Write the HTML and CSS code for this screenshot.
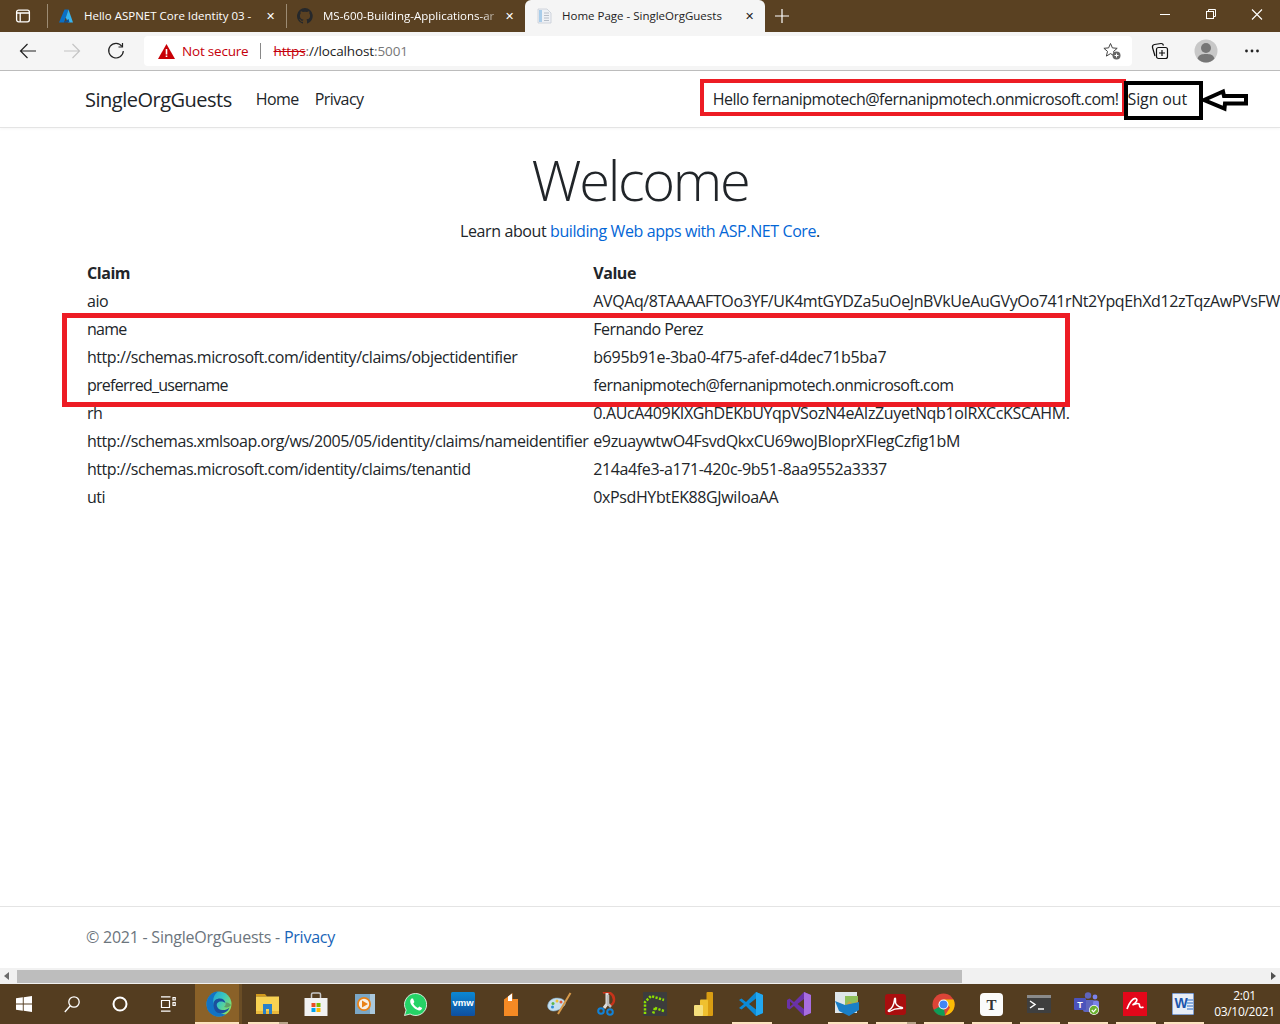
FILE: index.html
```html
<!DOCTYPE html>
<html lang="en">
<head>
<meta charset="utf-8">
<title>Home Page - SingleOrgGuests</title>
<link rel="stylesheet" href="styles.css">
</head>
<body>
<div class="window">
  <div class="tabstrip">
    <div class="tabstrip-btn">
      <svg width="16" height="16" viewBox="0 0 16 16" fill="none" stroke="#fff" stroke-width="1.3"><rect x="1.6" y="2.2" width="12.8" height="11.6" rx="2"/><path d="M1.6 5h12.8M5.2 5v8.8" /></svg>
    </div>
    <div class="tab">
      <svg class="favicon" width="16" height="16" viewBox="0 0 16 16"><path d="M6.5 1.5h4L6 14.5H1z" fill="#0a6fc4"/><path d="M10.5 1.5 15 14.5h-5L7.8 9.5z" fill="#37b4ef"/><path d="M5.5 14.5 10.5 11l1 3.5z" fill="#0d4f96"/></svg>
      <span class="tab-title">Hello ASPNET Core Identity 03 - </span>
      <span class="tab-x">✕</span>
    </div>
    <div class="tab tab-second">
      <svg class="favicon" width="16" height="16" viewBox="0 0 16 16"><path fill="#26282b" d="M8 0a8 8 0 0 0-2.5 15.6c.4.1.5-.2.5-.4v-1.4c-2.2.5-2.7-1-2.7-1-.4-.9-.9-1.2-.9-1.2-.7-.5.1-.5.1-.5.8.1 1.2.8 1.2.8.7 1.2 1.9.9 2.3.7.1-.5.3-.9.5-1.1-1.8-.2-3.6-.9-3.6-4 0-.9.3-1.6.8-2.1-.1-.2-.4-1 .1-2.1 0 0 .7-.2 2.2.8a7.500 7.500 0 0 1 4 0c1.500-1 2.200-.8 2.200-.8.400 1.100.200 1.900.100 2.100.500.600.800 1.300.800 2.100 0 3.100-1.900 3.700-3.700 3.900.300.300.600.800.600 1.500v2.200c0 .200.100.500.500.400A8 8 0 0 0 8 0z"/></svg>
      <span class="tab-title tab-title-fade">MS-600-Building-Applications-ar</span>
      <span class="tab-x">✕</span>
    </div>
    <div class="tab tab-active">
      <svg class="favicon" width="16" height="16" viewBox="0 0 16 16"><path d="M1 1h9l4 4v10H1z" fill="#eef1f5" stroke="#c6cdd6" stroke-width=".8"/><path d="M2 2h3v12H2z" fill="#a9cdea"/><path d="M7 5h5M7 7.500h5M7 10h5M7 12.500h5" stroke="#b7bec8"/></svg>
      <span class="tab-title">Home Page - SingleOrgGuests</span>
      <span class="tab-x">✕</span>
    </div>
    <div class="newtab">
      <svg width="16" height="16" viewBox="0 0 16 16" stroke="#fff" stroke-width="1.2"><path d="M8 1v14M1 8h14"/></svg>
    </div>
    <div class="winctrls">
      <svg width="46" height="32" viewBox="0 0 46 32" stroke="#fff" fill="none"><path d="M18 14.500h10"/></svg>
      <svg width="46" height="32" viewBox="0 0 46 32" stroke="#fff" fill="none"><rect x="18.500" y="11.500" width="7" height="7"/><path d="M20.500 11.500v-2h7v7h-2"/></svg>
      <svg width="46" height="32" viewBox="0 0 46 32" stroke="#fff" fill="none" stroke-width="1.1"><path d="M18 9.500l10 10M28 9.500l-10 10"/></svg>
    </div>
  </div>
  <div class="toolbar">
    <div class="tool-btn"><svg width="18" height="18" viewBox="0 0 18 18" fill="none" stroke="#222" stroke-width="1.200"><path d="M17 9H1.500M8.500 2 1.500 9l7 7"/></svg></div>
    <div class="tool-btn"><svg width="18" height="18" viewBox="0 0 18 18" fill="none" stroke="#c4c4c4" stroke-width="1.200"><path d="M1 9h15.500M9.500 2l7 7-7 7"/></svg></div>
    <div class="tool-btn"><svg width="18" height="18" viewBox="0 0 18 18" fill="none" stroke="#222" stroke-width="1.200"><path d="M15 4.500A7.300 7.300 0 1 0 16.300 9"/><path d="M15.500 1v4h-4"/></svg></div>
    <div class="addressbar">
      <svg class="warn" width="17" height="15" viewBox="0 0 17 15"><path d="M8.500 0 17 15H0z" fill="#c80006"/><path d="M7.700 5h1.600v5.500H7.700zM7.700 11.500h1.600V13H7.700z" fill="#fff"/></svg>
      <span class="not-secure">Not secure</span>
      <span class="addr-sep"></span>
      <span class="url"><span class="url-https">https</span><span class="url-gray">:</span>//localhost<span class="url-gray">:5001</span></span>
      <svg class="addr-star" width="20" height="20" viewBox="0 0 20 20"><path d="M8.500 2.500l1.900 4.400 4.800.4-3.600 3.100 1 4.700-4.100-2.500-4.100 2.500 1.100-4.700L1.900 7.300l4.700-.4z" fill="none" stroke="#444" stroke-width="1"/><circle cx="14.500" cy="14.500" r="4" fill="#666"/><path d="M14.500 12.500v4M12.500 14.500h4" stroke="#fff"/></svg>
    </div>
    <div class="tool-right">
      <div class="tool-btn"><svg width="18" height="18" viewBox="0 0 18 18" fill="none" stroke="#111" stroke-width="1.200"><path d="M4 14 1.500 5.500Q1 3 3.500 2.500L10 1.500q2-.2 2.500 2"/><rect x="5.500" y="5.500" width="11" height="11" rx="2"/><path d="M11 8v6M8 11h6"/></svg></div>
      <div class="tool-btn"><svg width="24" height="24" viewBox="0 0 24 24"><circle cx="12" cy="12" r="11.500" fill="#c8c8c8"/><circle cx="12" cy="9" r="5" fill="#767676"/><path d="M3.500 19.500c1.500-4 4.500-4.500 8.500-4.500s7 .5 8.500 4.500A11.500 11.500 0 0 1 12 23.500a11.500 11.500 0 0 1-8.500-4z" fill="#767676"/></svg></div>
      <div class="tool-btn"><svg width="16" height="4" viewBox="0 0 16 4" fill="#222"><circle cx="2.500" cy="2" r="1.400"/><circle cx="8" cy="2" r="1.400"/><circle cx="13.500" cy="2" r="1.400"/></svg></div>
    </div>
  </div>

  <div class="viewport">
    <div class="page">
      <header class="navbar">
        <div class="container nav-row">
          <a class="brand">SingleOrgGuests</a>
          <a class="nav-link">Home</a>
          <a class="nav-link">Privacy</a>
          <div class="nav-right">
            <a class="nav-link nav-hello">Hello fernanipmotech@fernanipmotech.onmicrosoft.com!</a>
            <a class="nav-link nav-signout">Sign out</a>
          </div>
        </div>
      </header>
      <main class="container main">
        <div class="hero">
          <h1 class="display">Welcome</h1>
          <p class="lead">Learn about <a class="link">building Web apps with ASP.NET Core</a>.</p>
        </div>
        <table class="claims">
          <thead><tr><th>Claim</th><th>Value</th></tr></thead>
          <tbody>
            <tr><td>aio</td><td class="v-mid">AVQAq/8TAAAAFTOo3YF/UK4mtGYDZa5uOeJnBVkUeAuGVyOo741rNt2YpqEhXd12zTqzAwPVsFWI9kLm2Qx</td></tr>
            <tr><td class="c-tight">name</td><td class="v-tight">Fernando Perez</td></tr>
            <tr><td>http://schemas.microsoft.com/identity/claims/objectidentifier</td><td class="v-wide">b695b91e-3ba0-4f75-afef-d4dec71b5ba7</td></tr>
            <tr><td class="c-tight">preferred_username</td><td class="v-tight">fernanipmotech@fernanipmotech.onmicrosoft.com</td></tr>
            <tr><td>rh</td><td class="v-rh">0.AUcA409KIXGhDEKbUYqpVSozN4eAIzZuyetNqb1oIRXCcKSCAHM.</td></tr>
            <tr><td>http://schemas.xmlsoap.org/ws/2005/05/identity/claims/nameidentifier</td><td class="v-mid">e9zuaywtwO4FsvdQkxCU69woJBIoprXFIegCzfig1bM</td></tr>
            <tr><td>http://schemas.microsoft.com/identity/claims/tenantid</td><td class="v-mid">214a4fe3-a171-420c-9b51-8aa9552a3337</td></tr>
            <tr><td>uti</td><td class="v-mid">0xPsdHYbtEK88GJwiIoaAA</td></tr>
          </tbody>
        </table>
      </main>
      <footer class="footer">
        <div class="container">© 2021 - SingleOrgGuests - <a class="footer-link">Privacy</a></div>
      </footer>
      <div class="mark mark-hello"></div>
      <div class="mark mark-signout"></div>
      <div class="mark mark-table"></div>
      <svg class="mark-arrow" width="50" height="26" viewBox="0 0 50 26" fill="none" stroke="#000" stroke-width="4"><path d="M4 13 23 4.500l1 4.500h22v7.500H25l-.5 5z"/></svg>
    </div>
  </div>

  <div class="hscroll">
    <span class="arrow-left"></span>
    <div class="thumb"></div>
    <span class="arrow-right"></span>
  </div>

  <div class="taskbar">
    <div class="sysbtn"><svg width="16" height="16" viewBox="0 0 16 16" fill="#fff"><path d="M0 2.300 6.800 1.300v6.300H0zM7.700 1.200 16 0v7.600H7.700zM0 8.400h6.800v6.300L0 13.700zM7.700 8.400H16V16l-8.300-1.200z"/></svg></div>
    <div class="sysbtn"><svg width="16" height="17" viewBox="0 0 16 17" fill="none" stroke="#fff" stroke-width="1.300"><circle cx="10" cy="6" r="5.200"/><path d="M6.300 9.700.8 16"/></svg></div>
    <div class="sysbtn"><svg width="16" height="16" viewBox="0 0 16 16" fill="none" stroke="#fff" stroke-width="2"><circle cx="8" cy="8" r="6.500"/></svg></div>
    <div class="sysbtn"><svg width="16" height="16" viewBox="0 0 16 16" fill="none" stroke="#fff" stroke-width="1.200"><path d="M1 .8h9.500M1 15.200h9.500M1.500 4.500h8v7h-8zM13 1.500h2.200v2.500H13zM13 6.500h2.200v3H13z"/></svg></div>

    <div class="app app-active"><i class="run run-active"></i>
      <svg width="26" height="26" viewBox="0 0 26 26"><defs><linearGradient id="eg" x1="0" y1="0" x2="1" y2=".6"><stop offset="0" stop-color="#1c8fd8"/><stop offset=".55" stop-color="#35c4c4"/><stop offset="1" stop-color="#86e36a"/></linearGradient></defs><circle cx="13" cy="13" r="12.500" fill="url(#eg)"/><path d="M.5 13C.5 6 6 .8 12 .5 8 3.500 6.500 8 7.500 13c1.500 6 6.500 10 12.500 10.500A12.500 12.500 0 0 1 .5 13z" fill="#1273c4"/><path d="M7.500 14C7 9.500 10.500 7.500 14 7.500c3 0 5 1.800 5.500 4.500-2-2-7-2.500-8.500.5-1 2.500 1 6 5 6.500 3 .3 5-.5 7.500-2.500-1.500 5-8 7-12.500 5C8.500 20 7.800 17 7.500 14z" fill="#1b4f9e"/><path d="M19.500 12c.5 2-.5 3-1.500 4 3 1 6 0 7-2-.2-1-5-3.500-5.500-2z" fill="#5f9f6a"/></svg>
    </div>
    <div class="app"><i class="run run-split"></i>
      <svg width="23" height="20" viewBox="0 0 23 20"><path d="M0 0h9l2 2.500H0z" fill="#d39a1c"/><path d="M0 2.500h23V20H0z" fill="#f8d252"/><path d="M0 17h23v3H0z" fill="#eab93b"/><path d="M7 10h9v10h-3v-5h-3v5H7z" fill="#2a80c9"/></svg>
    </div>
    <div class="app app-store">
      <svg width="24" height="24" viewBox="0 0 24 24"><path d="M7.500 6V2.500q0-1.500 1.500-1.500h6q1.500 0 1.500 1.500V6" fill="none" stroke="#c8c8c8" stroke-width="1.500"/><rect x=".5" y="6" width="23" height="18" fill="#f2f2f2"/><rect x="7.500" y="11" width="4" height="4" fill="#ea4d23"/><rect x="12.500" y="11" width="4" height="4" fill="#7db900"/><rect x="7.500" y="16" width="4" height="4" fill="#00a3ee"/><rect x="12.500" y="16" width="4" height="4" fill="#fdb900"/></svg>
    </div>
    <div class="app app-media">
      <svg width="20" height="20" viewBox="0 0 20 20"><rect width="20" height="20" fill="#7ba7c6"/><rect x="15" width="5" height="20" fill="#aac8dc"/><circle cx="9" cy="10" r="7" fill="#e98218"/><circle cx="9" cy="10" r="5.200" fill="#f7f0e6"/><path d="M7 6.500l6 3.500-6 3.500z" fill="#e98218"/></svg>
    </div>
    <div class="app app-wa">
      <svg width="23" height="23" viewBox="0 0 23 23"><path d="M11.500.5a11 11 0 0 0-9.400 16.600L.5 22.500l5.600-1.500A11 11 0 1 0 11.500.5z" fill="#25d366" stroke="#fff" stroke-width=".8"/><path d="M7.500 5.500c-1.500 1.300-2 3.500 0 6.500s5 5 7.500 5.500c2 .2 3-1.500 3.200-2.500l-3-1.500-1.300 1.400c-1.500-.5-3.800-2.600-4.600-4.400l1.100-1.400L9 5.500z" fill="#fff"/></svg>
    </div>
    <div class="app">
      <svg width="24" height="24" viewBox="0 0 24 24"><defs><linearGradient id="vg" x1="0" y1="0" x2="0" y2="1"><stop offset="0" stop-color="#0b88d3"/><stop offset="1" stop-color="#0f4fa0"/></linearGradient></defs><rect width="24" height="24" rx="1.500" fill="url(#vg)"/><text x="12" y="14" class="ico-vmw">vmw</text></svg>
    </div>
    <div class="app">
      <svg width="16" height="24" viewBox="0 0 16 24"><path d="M1 7.500 9.500 1v6H15v17H1z" fill="#f58a24"/><path d="M5 4.500 9 1.500v7.500H5z" fill="#fff"/></svg>
    </div>
    <div class="app">
      <svg width="25" height="24" viewBox="0 0 25 24"><path d="M1 12C3 6 10 5 15 7c4 2 4 5 2 7-3 1-3 4-6 4-6 3-12-1-10-6z" fill="#c6dfef" stroke="#7aa6c4" stroke-width=".6"/><circle cx="6" cy="11.500" r="1.500" fill="#5eb548"/><circle cx="10" cy="9" r="1.500" fill="#f0c237"/><circle cx="5.500" cy="15" r="1.500" fill="#2f8fd6"/><circle cx="14" cy="10" r="1.500" fill="#e05a3c"/><path d="M23.500 1 11 22" stroke="#d79a4a" stroke-width="2"/></svg>
    </div>
    <div class="app">
      <svg width="20" height="24" viewBox="0 0 20 24" fill="none"><path d="M6 1a7.500 7.500 0 0 1 11 7c0 3-2 5-5 6" stroke="#c8331a" stroke-width="2.500"/><path d="M10 1v11l-3 4" stroke="#ddd" stroke-width="3"/><path d="M11 3v9l3 3" stroke="#bbb" stroke-width="2.500"/><circle cx="4" cy="19" r="2.800" stroke="#1283d8" stroke-width="2"/><circle cx="13" cy="20" r="2.800" stroke="#1283d8" stroke-width="2"/></svg>
    </div>
    <div class="app">
      <svg width="24" height="24" viewBox="0 0 24 24"><rect width="24" height="24" fill="#3c3c3c"/><path d="M2 22V10L8 4l13 4M12 16l9 3M12 16l-2 6" fill="none" stroke="#8fe000" stroke-width="2.500" stroke-dasharray="2.200 1.400"/></svg>
    </div>
    <div class="app">
      <svg width="19" height="24" viewBox="0 0 19 24"><rect x="12.500" width="6.500" height="24" rx="1" fill="#d99d12"/><rect x="6" y="7.500" width="8" height="16.500" rx="1" fill="#efc02f"/><rect y="13" width="9" height="11" rx="1" fill="#f5df7c"/></svg>
    </div>
    <div class="app"><i class="run"></i>
      <svg width="24" height="24" viewBox="0 0 24 24"><path d="M17 0 7 10 2.500 6.500 0 8l5 4-5 4 2.500 1.500L7 14l10 10 7-3V3z" fill="#0d8ad6"/><path d="M17 0l7 3v18l-7 3z" fill="#22a8f0"/><path d="M17 6.500v11L10 12z" fill="#543d20"/></svg>
    </div>
    <div class="app">
      <svg width="24" height="24" viewBox="0 0 24 24"><path d="M17 0 7 10 2.500 6.500 0 8v8l2.500 1.500L7 14l10 10 7-3V3z" fill="#6a32a8"/><path d="M17 0l7 3v18l-7 3z" fill="#a86de0"/><path d="M17 7v10l-6.500-5zM3 9.500v5L6 12z" fill="#543d20"/></svg>
    </div>
    <div class="app"><i class="run"></i>
      <svg width="24" height="24" viewBox="0 0 24 24"><rect x="0" y="0" width="22" height="21" fill="#dfe6ea"/><rect x="10" y="4" width="13" height="10" fill="#8ebf5a"/><path d="M10 14l4-5 4 3 5-4v6z" fill="#c9a443"/><path d="M0 9l10 4 14-3v8l-10 6-10-5z" fill="#1a7fc7"/></svg>
    </div>
    <div class="app"><i class="run run-split"></i>
      <svg width="21" height="21" viewBox="0 0 21 21"><rect width="21" height="21" rx="3" fill="#a90e0e"/><path d="M3.500 16.500c3-1.500 5.500-6 6-11 .2-2 1.300-1.500 1 .5-.7 4 2 7 6.500 7.500 1 .3.500 1.200-.5 1-5-.5-8 .5-11 2.500-1.500 1-2.500.3-2-.5z" fill="none" stroke="#fff" stroke-width="1.500"/></svg>
    </div>
    <div class="app"><i class="run"></i>
      <svg width="23" height="23" viewBox="0 0 23 23"><circle cx="11.500" cy="11.500" r="11" fill="#db4437"/><path d="M11.500 11.500 1.500 17A11 11 0 0 0 13 22.400z" fill="#0f9d58"/><path d="M11.500 6.500h10a11 11 0 0 1-8.500 15.900l5-8z" fill="#fbbc05"/><circle cx="11.500" cy="11.500" r="5" fill="#fff"/><circle cx="11.500" cy="11.500" r="4" fill="#4285f4"/></svg>
    </div>
    <div class="app"><i class="run"></i>
      <svg width="23" height="23" viewBox="0 0 23 23"><rect width="23" height="23" rx="4" fill="#fbfbfb"/><text x="11.500" y="17" class="ico-t">T</text></svg>
    </div>
    <div class="app"><i class="run"></i>
      <svg width="24" height="18" viewBox="0 0 24 18"><rect width="24" height="18" fill="#3f3f3f"/><rect width="24" height="3" fill="#8a8a8a"/><path d="M3 6l5 3.500L3 13" fill="none" stroke="#fff" stroke-width="1.500"/><path d="M11 14h6" stroke="#fff" stroke-width="1.500"/></svg>
    </div>
    <div class="app"><i class="run"></i>
      <svg width="26" height="24" viewBox="0 0 26 24"><circle cx="14" cy="3.500" r="3.200" fill="#5f65bd"/><circle cx="21" cy="5" r="2.400" fill="#7b83eb"/><rect x="9" y="8" width="12" height="12" rx="2" fill="#5f65bd"/><rect x="19" y="8.500" width="6" height="9" rx="2" fill="#7b83eb"/><rect y="6" width="12" height="12" rx="1" fill="#4b53bc"/><text x="6" y="15.500" class="ico-teams">T</text><circle cx="20" cy="18" r="5" fill="#fff"/><circle cx="20" cy="18" r="4.300" fill="#6bb130"/><path d="M17.800 18l1.700 1.800 2.800-3.200" fill="none" stroke="#fff" stroke-width="1.200"/></svg>
    </div>
    <div class="app"><i class="run"></i>
      <svg width="24" height="24" viewBox="0 0 24 24"><rect width="24" height="24" fill="#e2071a"/><path d="M4 17C6 11 10 6 12.500 6.500c2.500.500 1.500 4-3 6.500 3-1 7-3 7 .5 0 2 2 2.500 4 1.500" fill="none" stroke="#fff" stroke-width="1.700"/></svg>
    </div>
    <div class="app"><i class="run"></i>
      <svg width="22" height="22" viewBox="0 0 22 22"><rect width="22" height="22" fill="#e8eef7"/><rect x="0" y="0" width="22" height="22" fill="none" stroke="#1d4fa3" stroke-width="1"/><text x="9" y="15" class="ico-w">W</text><path d="M15 7h6M15 10h6M15 13h6M15 16h6" stroke="#2b6cc4"/></svg>
    </div>
    <div class="clock"><span>2:01</span><span>03/10/2021</span></div>
  </div>
</div>
</body>
</html>
```
FILE: styles.css
```css
* { box-sizing: border-box; }
html, body { margin: 0; padding: 0; height: 100%; overflow: hidden; }
body { font-family: "Open Sans", "Noto Sans", sans-serif; color: #212529; background: #fff; }
.window { width: 1280px; height: 1024px; display: flex; flex-direction: column; overflow: hidden; }

/* tab strip */
.tabstrip { height: 32px; flex: none; background: #5a4122; display: flex; align-items: stretch; color: #fff; font-size: 11.500px; }
.tabstrip-btn { width: 48px; display: flex; align-items: center; justify-content: center; flex: none; border-right: 1px solid #9d8c74; margin: 4px 0; padding-right: 1px; }
.tab { width: 239px; flex: none; display: flex; align-items: center; padding: 0 8px 1px 10px; position: relative; gap: 10px; }
.tab:nth-child(2) { border-right: 1px solid #9d8c74; margin: 4px 0; padding-bottom: 1px; }
.tab-second { width: 238px; }
.favicon { flex: none; }
.tab-title { flex: 1; white-space: nowrap; overflow: hidden; min-width: 0; }
.tab-title-fade { color: #fff; -webkit-mask-image: linear-gradient(90deg, #000 90%, rgba(0,0,0,.35) 100%); mask-image: linear-gradient(90deg, #000 90%, rgba(0,0,0,.35) 100%); }
.tab-x { width: 16px; flex: none; text-align: center; font-size: 11px; margin-left: -6px; }
.tab-active { width: 240px; background: #f5f5f5; color: #222; border-radius: 6px 6px 0 0; padding: 0 8px 1px 12px; gap: 9px; }
.newtab { width: 34px; flex: none; display: flex; align-items: center; justify-content: center; }
.winctrls { margin-left: auto; display: flex; }

/* toolbar */
.toolbar { height: 39px; flex: none; background: #f5f5f5; border-bottom: 1px solid #bcbcbc; display: flex; align-items: center; padding: 0 4px 0 5px; }
.tool-btn { width: 46px; height: 30px; display: flex; align-items: center; justify-content: center; flex: none; margin-left: -2px; }
.toolbar > .tool-btn:first-child { margin-left: 0; }
.addressbar { width: 988px; height: 30px; background: #fff; border-radius: 4px; display: flex; align-items: center; margin-left: 5px; padding-left: 14px; flex: none; font-size: 13.500px; letter-spacing: -.2px; }
.warn { flex: none; }
.not-secure { color: #c5000b; margin-left: 7px; }
.addr-sep { width: 1px; height: 16px; background: #888; margin: 0 12px; }
.url { color: #222; white-space: nowrap; letter-spacing: -.12px; }
.url-https { color: #c5000b; text-decoration: line-through; }
.url-gray { color: #777; }
.addr-star { margin-left: auto; margin-right: 10px; }
.tool-right { display: flex; margin-left: 5px; }
.tool-right .tool-btn { margin-left: 0; }

/* page viewport */
.viewport { flex: 1; min-height: 0; position: relative; overflow: hidden; background: #fff; }
.page { height: 100%; display: flex; flex-direction: column; position: relative; }
.container { width: 1140px; margin: 0 auto; padding: 0 15px; }
.navbar { height: 57px; flex: none; border-bottom: 1px solid #e4e4e4; box-shadow: 0 1px 3px rgba(0,0,0,.04); display: flex; align-items: center; }
.nav-row { display: flex; align-items: center; }
.brand { font-size: 20px; color: #212529; margin-right: 16px; letter-spacing: -.5px; }
.nav-link { font-size: 16px; color: #212529; padding: 0 8px; letter-spacing: -.57px; white-space: nowrap; }
.nav-right { margin-left: auto; display: flex; }
.nav-hello { padding: 0 9px 0 0; letter-spacing: -.5px; }
.nav-signout { padding-left: 0; letter-spacing: -.15px; }
.main { flex: 1; min-height: 0; }
.hero { text-align: center; padding-top: 18px; }
.display { font-size: 56px; font-weight: 300; line-height: 1.2; margin: 0 0 6px; letter-spacing: -2.300px; }
.lead { font-size: 16px; line-height: 24px; margin: 0 0 16px; letter-spacing: -.4px; }
.link { color: #0366d6; }
.claims { border-collapse: collapse; font-size: 16px; line-height: 24px; letter-spacing: -.45px; }
.claims th, .claims td { padding: 2px; text-align: left; white-space: nowrap; }
.claims th:first-child, .claims td:first-child { padding-right: 3px; }
.claims .c-tight { letter-spacing: -.73px; }
.claims .v-tight { letter-spacing: -.55px; }
.claims .v-mid { letter-spacing: -.38px; }
.claims .v-wide { letter-spacing: -.3px; }
.claims .v-rh { letter-spacing: -.36px; }
.footer { height: 62px; flex: none; border-top: 1px solid #e4e4e4; color: #6c757d; font-size: 16px; line-height: 60px; letter-spacing: -.24px; }
.footer .container { padding-left: 16px; }
.footer-link { color: #1864b8; }

/* annotations drawn over the screenshot */
.mark { position: absolute; pointer-events: none; }
.mark-hello { left: 700px; top: 8px; width: 426px; height: 37px; border: 4px solid #ed1c24; }
.mark-signout { left: 1124px; top: 10px; width: 79px; height: 39px; border: 4px solid #000; }
.mark-table { left: 62px; top: 242px; width: 1008px; height: 94px; border: 5px solid #ed1c24; }
.mark-arrow { position: absolute; left: 1200px; top: 16px; }

/* horizontal scrollbar */
.hscroll { height: 16px; flex: none; background: #f1f1f1; display: flex; align-items: center; padding: 0 4px; }
.thumb { position: absolute; left: 17px; width: 945px; height: 13px; background: #bdbdbd; }
.arrow-left { width: 0; height: 0; border: 4px solid transparent; border-right: 5px solid #6a6a6a; border-left: 0; }
.arrow-right { width: 0; height: 0; border: 4px solid transparent; border-left: 5px solid #505050; border-right: 0; margin-left: auto; }

/* taskbar */
.taskbar { height: 40px; flex: none; background: #543d20; display: flex; align-items: center; color: #fff; }
.sysbtn { width: 48px; height: 40px; display: flex; align-items: center; justify-content: center; flex: none; }
.app { width: 48px; height: 40px; display: flex; align-items: center; justify-content: center; flex: none; position: relative; }
.taskbar .sysbtn:nth-child(4) { margin-right: 3px; }
.app-active { background: linear-gradient(90deg, #8a6128 0 44px, #6a4d25 44px 47px, transparent 47px); }
.app-store { padding-left: 2px; }
.app-media { padding-left: 4px; }
.app-wa { margin-left: 4px; }
.run { position: absolute; left: 5px; bottom: 0; width: 40px; height: 2px; background: #fce3c0; }
.run-active { left: 0; width: 44px; }
.run-split { background: linear-gradient(90deg, #fce3c0 0 31px, #b9a58a 31px); }
.ico-vmw { font: 700 9.500px "Liberation Sans", sans-serif; fill: #fff; text-anchor: middle; }
.ico-t { font: 700 15px "Liberation Serif", serif; fill: #333; text-anchor: middle; }
.ico-teams { font: 700 9px "Liberation Sans", sans-serif; fill: #fff; text-anchor: middle; }
.ico-w { font: 700 14px "Liberation Sans", sans-serif; fill: #1d56ad; text-anchor: middle; }
.clock { flex: 1; display: flex; flex-direction: column; align-items: center; font-size: 12px; line-height: 16px; padding-left: 2px; letter-spacing: -.3px; }
```
